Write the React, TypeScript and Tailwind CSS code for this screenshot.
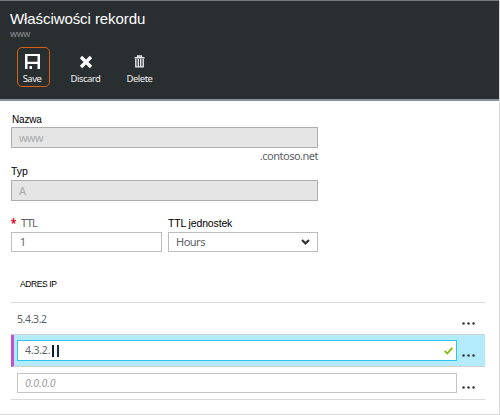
import type { ReactNode } from "react";

function Command({ label, className, children }: { label: string; className: string; children: ReactNode }) {
  return (
    <button className={`flex flex-col items-center text-white ${className}`}>
      <span className="flex h-[15px] items-center">{children}</span>
      <span className="mt-[4px] text-[9.5px] leading-[12px] tracking-[-0.5px] whitespace-nowrap text-[#f0f0f0]">{label}</span>
    </button>
  );
}

function Dots() {
  return (
    <svg className="block" width="13" height="3" viewBox="0 0 13 3" fill="#33373d">
      <circle cx="1.5" cy="1.5" r="1.25" />
      <circle cx="6.5" cy="1.5" r="1.25" />
      <circle cx="11.5" cy="1.5" r="1.25" />
    </svg>
  );
}

export default function App() {
  return (
    <div className="h-[415px] w-[500px] overflow-hidden border-r border-b border-[#d9d9d9] bg-white font-['Noto_Sans',sans-serif] text-[#5c5f66]">
      <header className="h-[101px] border-t border-b-2 border-t-[#75797b] border-b-[#84939c] bg-[#292e31] pl-[10px]">
        <h1 className="pt-[8px] font-['Liberation_Sans',sans-serif] text-[15px] leading-[20px] tracking-[-0.08px] whitespace-nowrap text-white">
          Właściwości rekordu
        </h1>
        <p className="text-[9px] leading-[9px] tracking-[-0.4px] text-[#8b8f92]">www</p>
        <div className="mt-[9px] flex pl-[7px]">
          <Command label="Save" className="h-[40px] w-[33px] rounded-[5px] border border-[#d65f10] pt-[6px] pr-[3px]">
            <svg width="15" height="15" viewBox="0 0 15 15" fill="#fff">
              <path d="M0 0H15V15H12.5V10H2.5V15H0ZM2.5 2V7.8H12.5V2Z" fillRule="evenodd" />
              <path d="M4.5 12H7V15H4.5Z" />
            </svg>
          </Command>
          <Command label="Discard" className="ml-[16px] w-[39px] pt-[7px]">
            <svg width="14" height="14" viewBox="0 0 14 14" stroke="#fff" strokeWidth="3.3">
              <path d="M2 2L12 12M12 2L2 12" />
            </svg>
          </Command>
          <Command label="Delete" className="ml-[14px] w-[41px] pt-[7px]">
            <svg width="11" height="13" viewBox="0 0 11 13" fill="none" stroke="#e6e7e8">
              <path d="M0.5 2.7H10.5M3.7 2.5V1H7.3V2.5" strokeWidth="1.5" />
              <path d="M1.8 4V11.9H9.2V4M4.3 4V11.5M6.7 4V11.5" strokeWidth="1.4" />
            </svg>
          </Command>
        </div>
      </header>

      <main className="px-[11px]">
        <section className="w-[307px]">
          <label className="block h-[26px] pt-[12px] pl-[1px] font-['Liberation_Sans',sans-serif] text-[10px] leading-[14px] tracking-[-0.2px] text-black">
            Nazwa
          </label>
          <div className="h-[21px] border border-[#adadad] bg-[#e5e5e5] pl-[7px] text-[11px] leading-[20px] tracking-[-0.8px] text-[#a8aaad]">www</div>
          <div className="h-[17px] text-right text-[11px] leading-[16px] tracking-[-0.5px]">.contoso.net</div>
          <label className="block h-[15px] font-['Liberation_Sans',sans-serif] text-[10.5px] leading-[13px] text-black">Typ</label>
          <div className="h-[21px] border border-[#adadad] bg-[#e5e5e5] pl-[7px] text-[11px] leading-[19px] text-[#a8aaad]">A</div>
          <div className="flex gap-[6px] pt-[14px]">
            <div className="w-[151px]">
              <label className="flex h-[17px] items-start text-[11px] leading-[16px] tracking-[-0.7px]">
                <svg className="mt-[3px] mr-[5px]" width="5" height="6" viewBox="0 0 5 6" stroke="#f01428" strokeWidth="1.3">
                  <path d="M2.5 0V3L0 2.3M2.5 3L5 2.3M2.5 3L1 5.5M2.5 3L4 5.5" fill="none" />
                </svg>
                TTL
              </label>
              <div className="h-[20px] border border-[#bdbdbd] pl-[8px] text-[10.5px] leading-[19px]">1</div>
            </div>
            <div className="w-[150px]">
              <label className="block h-[17px] font-['Liberation_Sans',sans-serif] text-[10.5px] leading-[17px] tracking-[-0.15px] whitespace-nowrap text-black">
                TTL jednostek
              </label>
              <div className="flex h-[20px] items-center justify-between border border-[#bdbdbd] pr-[7px] pl-[7px] text-[11px] tracking-[-0.5px]">
                Hours
                <svg width="9" height="6" viewBox="0 0 9 6" fill="none" stroke="#33373d" strokeWidth="2.2">
                  <path d="M1 1L4.5 4.4L8 1" />
                </svg>
              </div>
            </div>
          </div>
        </section>

        <section className="w-[474px]">
          <h2 className="h-[51px] border-b border-[#d9d9d9] pt-[26px] pl-[9px] font-['Liberation_Sans',sans-serif] text-[8.5px] leading-[12px] tracking-[-0.4px] text-black">
            ADRES IP
          </h2>
          <div className="flex h-[32px] justify-between border-b border-[#cfcfcf] pr-[10px] pl-[6px]">
            <span className="text-[10.5px] leading-[32px] tracking-[-0.4px]">5.4.3.2</span>
            <span className="pt-[19px]"><Dots /></span>
          </div>
          <div className="flex h-[32px] justify-between border-b border-l-[3px] border-b-[#cfcfcf] border-l-[#c44fd6] bg-[#b3ebfa] pr-[10px] pl-[3px]">
            <div className="mt-[5px] flex h-[21px] w-[440px] items-center border border-[#2ec5f3] bg-white pr-[3px] pl-[7px] text-[10.5px] tracking-[-0.2px]">
              4.3.2.
              <span className="ml-[2px] flex gap-[3px]">
                <i className="h-[12px] w-[2px] bg-[#081b38]" />
                <i className="h-[12px] w-[2px] bg-[#102d50]" />
              </span>
              <svg className="ml-auto" width="9" height="8" viewBox="0 0 9 8" fill="none" stroke="#7fba00" strokeWidth="1.8">
                <path d="M0.8 3.8L3.2 6.5L8.2 0.8" />
              </svg>
            </div>
            <span className="pt-[19px]"><Dots /></span>
          </div>
          <div className="flex h-[33px] justify-between border-b border-[#d9d9d9] pr-[10px] pl-[6px]">
            <div className="mt-[6px] h-[20px] w-[440px] border border-[#c4c4c4] pl-[7px] text-[10.5px] leading-[19px] tracking-[-0.1px] text-[#999ba0] italic">0.0.0.0</div>
            <span className="pt-[19px]"><Dots /></span>
          </div>
        </section>
      </main>
    </div>
  );
}
